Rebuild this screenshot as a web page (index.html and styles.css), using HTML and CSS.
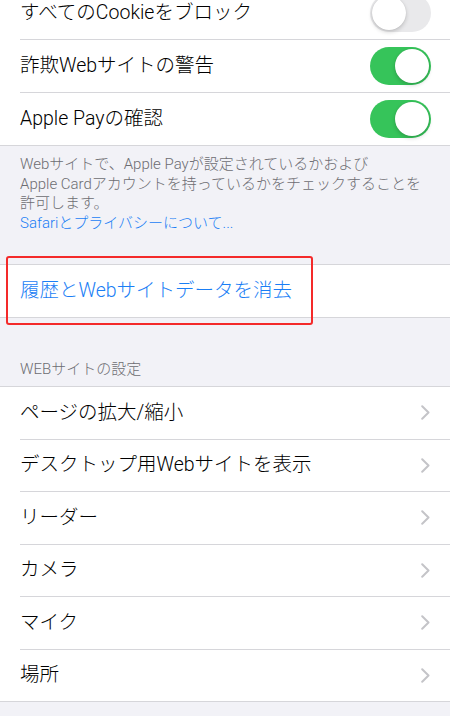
FILE: index.html
```html
<!DOCTYPE html>
<html lang="ja">
<head>
<meta charset="utf-8">
<link rel="stylesheet" href="styles.css">
</head>
<body>
<div class="page">
  <div class="group first">
    <div class="row"><div class="cell"><span class="label">すべてのCookieをブロック</span><span class="toggle"><span class="knob"></span></span></div></div>
    <div class="row"><div class="cell"><span class="label">詐欺Webサイトの警告</span><span class="toggle on"><span class="knob"></span></span></div></div>
    <div class="row"><div class="cell last"><span class="label">Apple Payの確認</span><span class="toggle on"><span class="knob"></span></span></div></div>
  </div>
  <div class="footer">
    <div class="line">Webサイトで、Apple Payが設定されているかおよび</div>
    <div class="line">Apple Cardアカウントを持っているかをチェックすることを</div>
    <div class="line">許可します。</div>
    <div class="line link">Safariとプライバシーについて...</div>
  </div>
  <div class="group clear">
    <div class="row"><div class="cell last"><span class="label blue">履歴とWebサイトデータを消去</span></div></div>
    <div class="highlight"></div>
  </div>
  <div class="header">WEBサイトの設定</div>
  <div class="group list">
    <div class="row"><div class="cell"><span class="label">ページの拡大/縮小</span><svg class="chev" width="9" height="15" viewBox="0 0 9 15"><polyline points="1.2,1.2 7.5,7.5 1.2,13.8"/></svg></div></div>
    <div class="row"><div class="cell"><span class="label">デスクトップ用Webサイトを表示</span><svg class="chev" width="9" height="15" viewBox="0 0 9 15"><polyline points="1.2,1.2 7.5,7.5 1.2,13.8"/></svg></div></div>
    <div class="row"><div class="cell"><span class="label">リーダー</span><svg class="chev" width="9" height="15" viewBox="0 0 9 15"><polyline points="1.2,1.2 7.5,7.5 1.2,13.8"/></svg></div></div>
    <div class="row"><div class="cell"><span class="label">カメラ</span><svg class="chev" width="9" height="15" viewBox="0 0 9 15"><polyline points="1.2,1.2 7.5,7.5 1.2,13.8"/></svg></div></div>
    <div class="row"><div class="cell"><span class="label">マイク</span><svg class="chev" width="9" height="15" viewBox="0 0 9 15"><polyline points="1.2,1.2 7.5,7.5 1.2,13.8"/></svg></div></div>
    <div class="row"><div class="cell last"><span class="label">場所</span><svg class="chev" width="9" height="15" viewBox="0 0 9 15"><polyline points="1.2,1.2 7.5,7.5 1.2,13.8"/></svg></div></div>
  </div>
</div>
</body>
</html>
```
FILE: styles.css
```css
html, body {
  margin: 0;
  padding: 0;
  background: #f2f2f7;
}
body {
  font-family: "Roboto", "Noto Sans CJK JP", sans-serif;
  color: #000;
  overflow: hidden;
  height: 716px;
}
.page {
  display: flex;
  flex-direction: column;
}
.group {
  background: #fff;
  border-bottom: 1px solid #d6d6da;
}
.group.first {
  margin-top: -13px;
}
.row {
  padding-left: 20px;
}
.cell {
  height: 52px;
  border-bottom: 1px solid #d6d6da;
  display: flex;
  align-items: center;
  justify-content: space-between;
  padding-right: 19px;
}
.cell.last {
  border-bottom: none;
  height: 52px;
}
.list .cell {
  height: 51.5px;
  padding-right: 20px;
}
.list .cell.last {
  height: 51.5px;
}
.label {
  font-size: 19.5px;
  line-height: 24px;
  font-weight: 300;
  white-space: nowrap;
}
.label.blue {
  color: #1a7ef5;
}
.toggle {
  width: 61px;
  height: 38px;
  border-radius: 19px;
  background: #e9e9eb;
  display: flex;
  align-items: center;
  padding: 0 2px;
  box-sizing: border-box;
}
.toggle.on {
  background: #36c45a;
  justify-content: flex-end;
}
.knob {
  width: 34px;
  height: 34px;
  border-radius: 50%;
  background: #fff;
  box-shadow: 0 2px 4px rgba(0,0,0,0.18), 0 0 1px rgba(0,0,0,0.15);
}
.footer {
  padding: 9px 20px 31px;
  font-size: 15px;
  line-height: 19.5px;
  font-weight: 300;
  color: #6d6d72;
}
.footer .line {
  white-space: nowrap;
}
.footer .link {
  color: #1a7ef5;
}
.group.clear {
  border-top: 1px solid #d6d6da;
  position: relative;
}
.highlight {
  position: absolute;
  left: 6px;
  top: -9px;
  width: 307px;
  height: 69px;
  border: 2px solid #f42a2a;
  border-radius: 3px;
  box-sizing: border-box;
}
.header {
  padding: 42px 20px 8px;
  font-size: 15px;
  line-height: 18px;
  font-weight: 300;
  color: #6d6d72;
}
.list {
  border-top: 1px solid #d6d6da;
}
.chev {
  display: block;
}
.chev polyline {
  fill: none;
  stroke: #c4c4c8;
  stroke-width: 2;
  stroke-linecap: round;
  stroke-linejoin: round;
}
```
